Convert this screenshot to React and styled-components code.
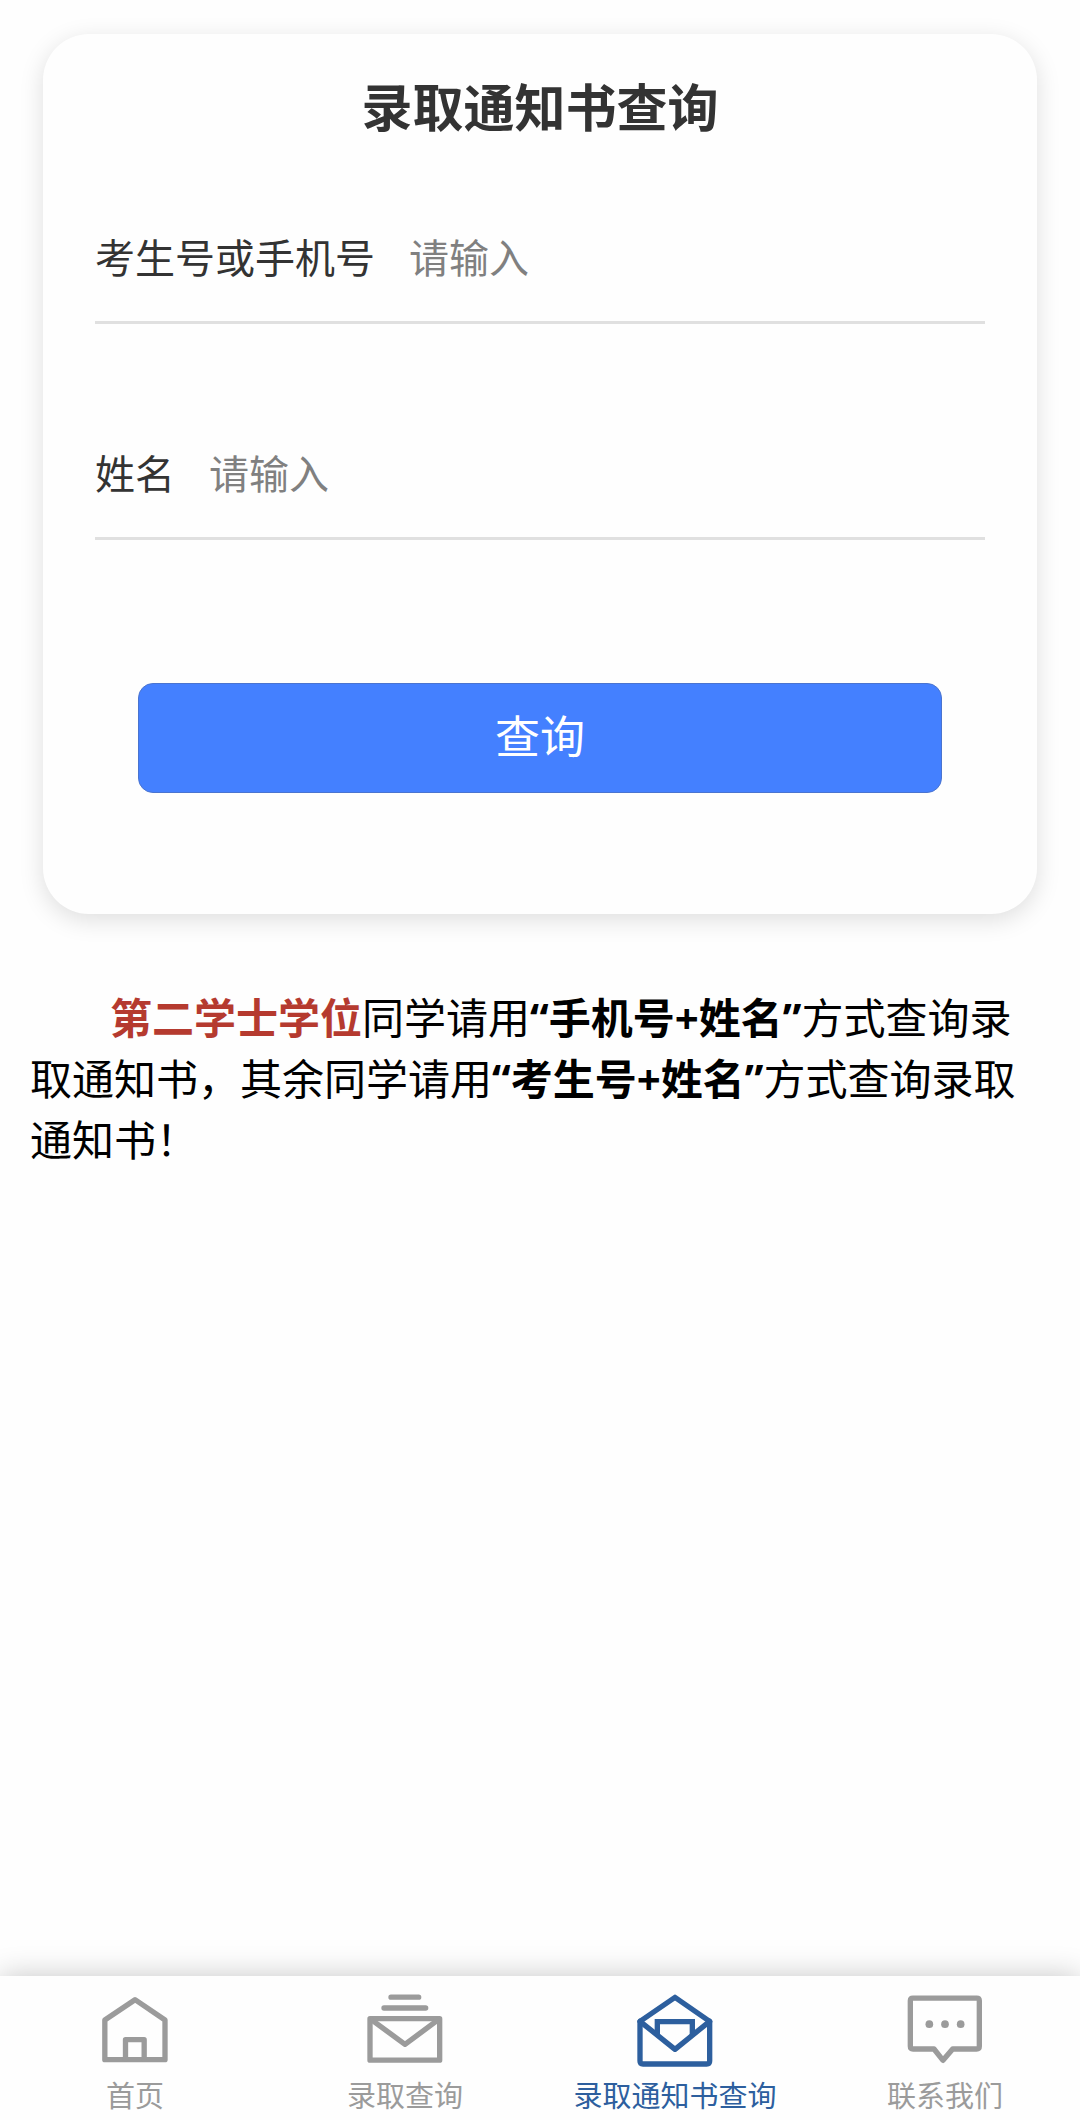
import styled, { createGlobalStyle } from 'styled-components';

const navItems = [
  { label: '首页', href: '#home', icon: HomeIcon },
  { label: '录取查询', href: '#admission', icon: MailListIcon },
  { label: '录取通知书查询', href: '#notice', icon: OpenMailIcon, active: true },
  { label: '联系我们', href: '#contact', icon: ChatIcon },
];

export default function App() {
  return (
    <>
      <GlobalStyle />
      <Page>
        <Card onSubmit={(e) => e.preventDefault()}>
          <Title>录取通知书查询</Title>

          <Fields>
            <Field>
              <Label htmlFor="account">考生号或手机号</Label>
              <Input id="account" placeholder="请输入" />
            </Field>
            <Field>
              <Label htmlFor="name">姓名</Label>
              <Input id="name" placeholder="请输入" />
            </Field>
          </Fields>

          <SubmitButton type="submit">查询</SubmitButton>
        </Card>

        <Note>
          <Highlight>第二学士学位</Highlight>同学请用<strong>“手机号+姓名”</strong>方式查询录取通知书，其余同学请用<strong>“考生号+姓名”</strong>方式查询录取通知书！
        </Note>

        <NavBar>
          {navItems.map(({ label, href, icon: Icon, active }) => (
            <NavLink key={href} href={href} $active={active}>
              <Icon />
              {label}
            </NavLink>
          ))}
        </NavBar>
      </Page>
    </>
  );
}

function HomeIcon() {
  return (
    <NavIcon viewBox="105 90 240 240">
      <path d="M134.500 180 L225 119 L315 180 V299 H134.500 Z" />
      <path d="M196.500 298 V239 H252.500 V298" />
    </NavIcon>
  );
}

function MailListIcon() {
  return (
    <NavIcon viewBox="135 90 240 240">
      <path d="M213 111.500 H296 M192 144 H317" />
      <path d="M150 176 H359 V300.500 H150 Z" />
      <path d="M158 182 L255 253 L351 182" />
    </NavIcon>
  );
}

function OpenMailIcon() {
  return (
    <NavIcon viewBox="225 90 240 240">
      <path d="M240 184 L345 112 L449 184 V303 Q449 312 440 312 H249 Q240 312 240 303 Z" />
      <path d="M240 184 L345 268 L449 184" />
      <path strokeLinejoin="miter" strokeLinecap="butt" d="M292 226 V185 H397 V226" />
    </NavIcon>
  );
}

function ChatIcon() {
  return (
    <NavIcon viewBox="225 90 240 240">
      <path d="M249 114.500 H440 Q448 114.500 448 122 V259 Q448 267 440 267 H368 L339 301 L312 267 H249 Q241 267 241 259 V122 Q241 114.500 249 114.500 Z" />
      <g fill="currentColor" stroke="none">
        <circle cx="298" cy="192.500" r="11.500" />
        <circle cx="345" cy="192.500" r="11.500" />
        <circle cx="392" cy="192.500" r="11.500" />
      </g>
    </NavIcon>
  );
}

const GlobalStyle = createGlobalStyle`
  * {
    box-sizing: border-box;
  }
  body {
    margin: 0;
    background: #fefefe;
    font-family: 'Noto Sans', 'Noto Sans CJK SC', sans-serif;
  }
`;

const Page = styled.div`
  min-height: 100vh;
  display: flex;
  flex-direction: column;
`;

const Card = styled.form`
  margin: 34px 43px 0;
  padding: 43px 52px 121px;
  border-radius: 46px;
  background: #fefefe;
  box-shadow: 0 6px 24px rgba(0, 0, 0, 0.13);
`;

const Title = styled.h1`
  margin: 0;
  font-size: 51px;
  line-height: 60px;
  font-weight: 700;
  text-align: center;
  color: #333;
`;

const Fields = styled.div`
  margin-top: 93px;
  display: flex;
  flex-direction: column;
  gap: 122px;
`;

const Field = styled.div`
  display: flex;
  align-items: center;
  gap: 34px;
  padding-bottom: 35px;
  border-bottom: 3px solid #e0e0e0;
`;

const Label = styled.label`
  flex-shrink: 0;
  font-size: 40px;
  line-height: 56px;
  color: #333;
`;

const Input = styled.input`
  flex: 1;
  min-width: 0;
  height: 56px;
  padding: 0;
  border: none;
  outline: none;
  background: transparent;
  font-family: inherit;
  font-size: 40px;
  line-height: 56px;
  color: #333;

  &::placeholder {
    color: #808080;
    opacity: 1;
  }
`;

const SubmitButton = styled.button`
  display: block;
  width: calc(100% - 86px);
  height: 110px;
  margin: 143px auto 0;
  padding: 0 0 8px;
  border: 1px solid #4a74d0;
  border-radius: 15px;
  background: #4480ff;
  font-family: inherit;
  font-size: 45px;
  color: #fff;
`;

const Note = styled.p`
  margin: 73px 30px 60px;
  font-size: 42px;
  line-height: 61px;
  text-indent: 80px;
  color: #000;
`;

const Highlight = styled.strong`
  color: #b53a2f;
`;

const NavBar = styled.nav`
  margin-top: auto;
  display: grid;
  grid-template-columns: repeat(4, 1fr);
  padding: 14px 0 7px;
  background: #fefefe;
  box-shadow: 0 0 28px rgba(0, 0, 0, 0.22);
`;

const NavLink = styled.a`
  display: flex;
  flex-direction: column;
  align-items: center;
  gap: 9px;
  font-size: 29px;
  line-height: 34px;
  white-space: nowrap;
  text-decoration: none;
  color: ${({ $active }) => ($active ? '#2d5f9e' : '#9b9b9b')};
`;

const NavIcon = styled.svg.attrs({ 'aria-hidden': true })`
  width: 80px;
  height: 80px;
  fill: none;
  stroke: currentColor;
  stroke-width: 16px;
  stroke-linecap: round;
  stroke-linejoin: round;
`;
